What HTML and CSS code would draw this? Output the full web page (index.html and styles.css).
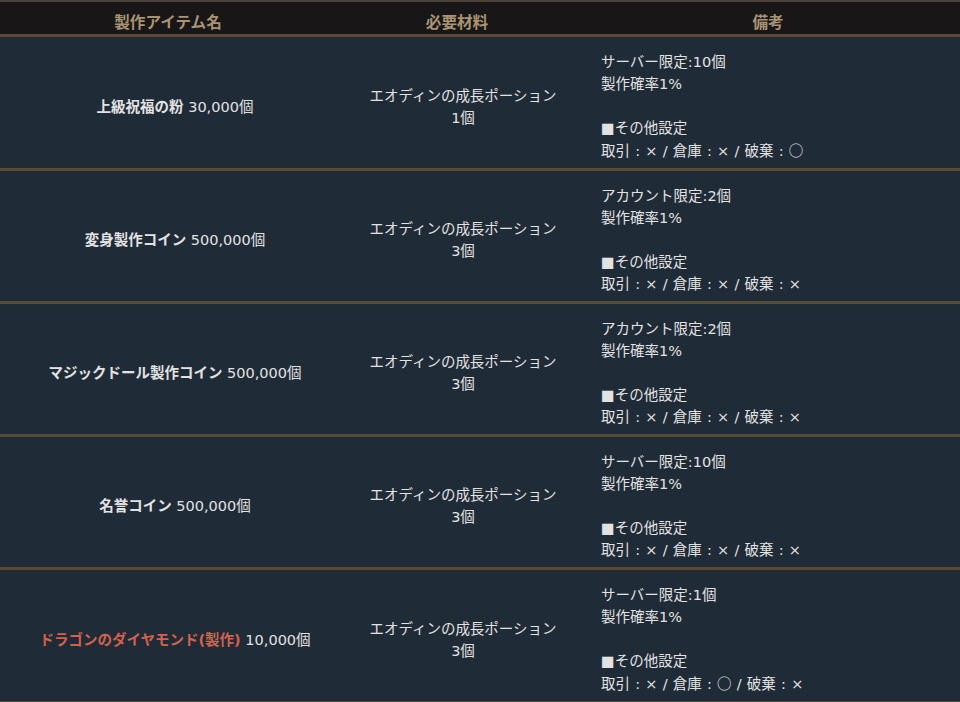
FILE: index.html
```html
<!DOCTYPE html>
<html lang="ja">
<head>
<meta charset="utf-8">
<link rel="stylesheet" href="styles.css">
</head>
<body>
<table class="craft">
  <colgroup>
    <col class="c-name">
    <col class="c-mat">
    <col class="c-note">
  </colgroup>
  <thead>
    <tr>
      <th class="h-name">製作アイテム名</th>
      <th class="h-mat">必要材料</th>
      <th class="h-note">備考</th>
    </tr>
  </thead>
  <tbody>
    <tr>
      <td class="name"><b>上級祝福の粉</b> 30,000個</td>
      <td class="mat">エオディンの成長ポーション<br>1個</td>
      <td class="note">サーバー限定:10個<br>製作確率1%<br><br>■その他設定<br>取引 : × / 倉庫 : × / 破棄 : <span class="mark">○</span></td>
    </tr>
    <tr>
      <td class="name"><b>変身製作コイン</b> 500,000個</td>
      <td class="mat">エオディンの成長ポーション<br>3個</td>
      <td class="note">アカウント限定:2個<br>製作確率1%<br><br>■その他設定<br>取引 : × / 倉庫 : × / 破棄 : ×</td>
    </tr>
    <tr>
      <td class="name"><b>マジックドール製作コイン</b> 500,000個</td>
      <td class="mat">エオディンの成長ポーション<br>3個</td>
      <td class="note">アカウント限定:2個<br>製作確率1%<br><br>■その他設定<br>取引 : × / 倉庫 : × / 破棄 : ×</td>
    </tr>
    <tr>
      <td class="name"><b>名誉コイン</b> 500,000個</td>
      <td class="mat">エオディンの成長ポーション<br>3個</td>
      <td class="note">サーバー限定:10個<br>製作確率1%<br><br>■その他設定<br>取引 : × / 倉庫 : × / 破棄 : ×</td>
    </tr>
    <tr>
      <td class="name"><b class="red">ドラゴンのダイヤモンド(製作)</b> 10,000個</td>
      <td class="mat">エオディンの成長ポーション<br>3個</td>
      <td class="note">サーバー限定:1個<br>製作確率1%<br><br>■その他設定<br>取引 : × / 倉庫 : <span class="mark">○</span> / 破棄 : ×</td>
    </tr>
  </tbody>
</table>
</body>
</html>
```

FILE: styles.css
```css
html, body {
  margin: 0;
  padding: 0;
  background: #202b38;
}
body {
  font-family: "DejaVu Sans", "Noto Sans CJK JP", sans-serif;
  color: #e2e2e2;
}
.craft {
  width: 960px;
  border-collapse: collapse;
  table-layout: fixed;
}
.c-name { width: 350px; }
.c-mat { width: 226px; }
.c-note { width: 384px; }
.craft thead th {
  background: #181616;
  color: #a89474;
  font-family: "Noto Sans CJK JP", sans-serif;
  font-size: 15.6px;
  font-weight: bold;
  height: 27px;
  padding: 5px 0 0;
  line-height: 20px;
  border-top: 2px solid #4a4238;
  border-bottom: 3px solid #5c4a36;
}
.craft th.h-name { padding-right: 14px; }
.craft th.h-mat { padding-right: 12px; }
.craft tbody td {
  background: #202b38;
  font-size: 14.5px;
  line-height: 22px;
  height: 110px;
  padding: 14px 0 6px;
  vertical-align: middle;
  border-bottom: 3px solid #5a4934;
}
.craft td.name,
.craft td.mat {
  text-align: center;
}
.craft td.note {
  text-align: left;
  padding-left: 25px;
  word-spacing: 0.6px;
}
.craft .mark {
  font-family: "Noto Sans CJK JP", sans-serif;
}
.craft b {
  font-weight: bold;
}
.craft b.red {
  color: #d4614c;
}
```
